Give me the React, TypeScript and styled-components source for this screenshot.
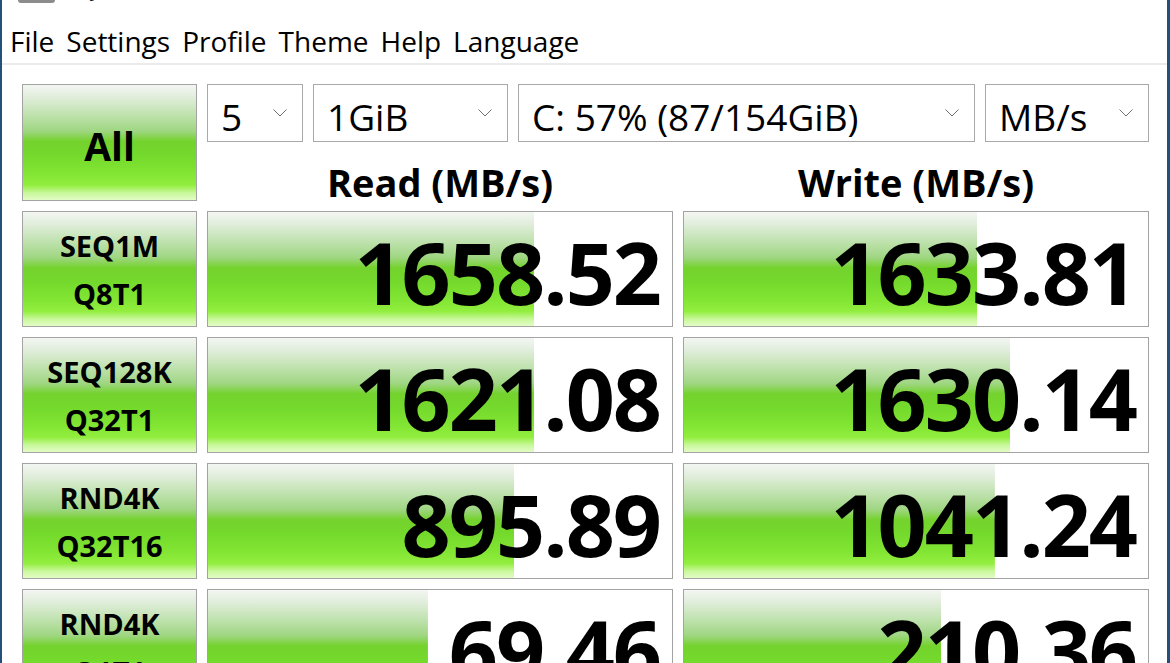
import styled, { createGlobalStyle } from "styled-components";

interface Result {
  name: string;
  detail: string;
  read: string;
  readPct: number;
  write: string;
  writePct: number;
}

const results: Result[] = [
  { name: "SEQ1M", detail: "Q8T1", read: "1658.52", readPct: 70.3, write: "1633.81", writePct: 63.2 },
  { name: "SEQ128K", detail: "Q32T1", read: "1621.08", readPct: 70.3, write: "1630.14", writePct: 70.3 },
  { name: "RND4K", detail: "Q32T16", read: "895.89", readPct: 66, write: "1041.24", writePct: 67 },
  { name: "RND4K", detail: "Q1T1", read: "69.46", readPct: 47.4, write: "210.36", writePct: 55.4 },
];

const menus = ["File", "Settings", "Profile", "Theme", "Help", "Language"];

const GREEN = `linear-gradient(
  to bottom,
  #f3f6f2 0%,
  #e2eedd 10%,
  #bfe2ae 26%,
  #9fd682 40%,
  #74d22d 49%,
  #74da2c 62%,
  #84e634 78%,
  #92ee3e 87%,
  #c9f89c 94%,
  #e2fcc6 100%
)`;

function Chevron() {
  return (
    <svg width="14" height="8" viewBox="0 0 14 8">
      <polyline points="0.5,0.5 7,7 13.5,0.5" fill="none" stroke="#707070" strokeWidth="1" />
    </svg>
  );
}

function Combo({ value, width }: { value: string; width?: number }) {
  return (
    <ComboBox $width={width}>
      <ComboText>{value}</ComboText>
      <Chevron />
    </ComboBox>
  );
}

function App() {
  return (
    <>
      <GlobalStyle />
      <Window>
        <TitleBar>
          <AppIcon />
          <TitleText>CrystalDiskMark 8.0.4 x64</TitleText>
        </TitleBar>
        <MenuBar>
          {menus.map((m) => (
            <MenuItem key={m}>{m}</MenuItem>
          ))}
        </MenuBar>
        <Board>
          <AllButton>All</AllButton>
          <Controls>
            <ComboRow>
              <Combo value="5" width={96} />
              <Combo value="1GiB" width={195} />
              <Combo value="C: 57% (87/154GiB)" width={457} />
              <Combo value="MB/s" />
            </ComboRow>
            <HeaderRow>
              <Heading>Read (MB/s)</Heading>
              <Heading>Write (MB/s)</Heading>
            </HeaderRow>
          </Controls>
          {results.map((r, i) => (
            <Row key={i}>
              <TestButton>
                <span>{r.name}</span>
                <span>{r.detail}</span>
              </TestButton>
              <Meter style={{ backgroundSize: `${r.readPct}% 100%` }}>{r.read}</Meter>
              <Meter style={{ backgroundSize: `${r.writePct}% 100%` }}>{r.write}</Meter>
            </Row>
          ))}
        </Board>
      </Window>
    </>
  );
}

const GlobalStyle = createGlobalStyle`
  html, body {
    margin: 0;
    padding: 0;
    width: 1170px;
    height: 663px;
    overflow: hidden;
    background: #ffffff;
    font-family: "Open Sans", "Noto Sans", sans-serif;
    color: #000000;
  }
  * {
    box-sizing: border-box;
  }
`;

const Window = styled.div`
  width: 1170px;
  height: 663px;
  overflow: hidden;

  display: flex;
  flex-direction: column;

  background: #ffffff;
  border-left: 2px solid #22507a;
  border-right: 3px solid #22507a;

  & > * {
    flex-shrink: 0;
  }
`;

const TitleBar = styled.div`
  height: 10px;
  overflow: hidden;

  display: flex;
  align-items: flex-start;
  gap: 12px;

  padding-left: 16px;
`;

const AppIcon = styled.div`
  width: 37px;
  height: 20px;
  margin-top: -17px;

  background: #8c8c8c;
  border-radius: 3px;
`;

const TitleText = styled.div`
  font-size: 22px;
  line-height: 24px;
  margin-top: -25px;
  color: #1a1a1a;
  white-space: nowrap;
`;

const MenuBar = styled.div`
  display: flex;
  gap: 12px;

  padding: 17px 8px 8px 8px;

  font-size: 28px;
  line-height: 28px;

  border-bottom: 2px solid #ebebeb;
`;

const MenuItem = styled.span`
  color: #000000;
`;

const Board = styled.div`
  display: grid;
  grid-template-columns: 175px 466px 466px;
  column-gap: 10px;
  row-gap: 10px;

  padding: 19px 0 0 20px;
`;

const greenButton = `
  border: 1px solid #a3a3a3;
  background: ${GREEN};
  font-weight: 700;
  color: #000000;
`;

const AllButton = styled.div`
  ${greenButton}
  height: 117px;

  display: flex;
  align-items: center;
  justify-content: center;

  padding-top: 6px;
  font-size: 39px;
  line-height: 39px;
`;

const Controls = styled.div`
  grid-column: 2 / 4;

  display: flex;
  flex-direction: column;
`;

const ComboRow = styled.div`
  display: flex;
  gap: 10px;
  height: 58px;
`;

const ComboBox = styled.div<{ $width?: number }>`
  ${(p) => (p.$width ? `width: ${p.$width}px;` : "flex: 1;")}
  height: 58px;

  display: flex;
  align-items: center;
  justify-content: space-between;

  padding: 6px 15px 0 13px;

  background: #ffffff;
  border: 1px solid #a9a9a9;

  svg {
    margin-top: -6px;
  }
`;

const ComboText = styled.span`
  font-size: 37px;
  line-height: 37px;
  white-space: nowrap;
`;

const HeaderRow = styled.div`
  height: 59px;

  display: grid;
  grid-template-columns: 466px 466px;
  column-gap: 10px;
`;

const Heading = styled.div`
  display: flex;
  align-items: flex-end;
  justify-content: center;

  font-size: 38px;
  line-height: 38px;
  font-weight: 700;
`;

const Row = styled.div`
  display: contents;
`;

const TestButton = styled.div`
  ${greenButton}
  height: 116px;

  display: flex;
  flex-direction: column;
  align-items: center;
  justify-content: center;

  padding-top: 2px;
  font-size: 29px;
  line-height: 48px;
`;

const Meter = styled.div`
  height: 116px;

  display: flex;
  align-items: center;
  justify-content: flex-end;

  padding: 6px 12px 0 0;

  border: 1px solid #a3a3a3;
  background-color: #ffffff;
  background-image: ${GREEN};
  background-repeat: no-repeat;

  font-size: 86px;
  line-height: 86px;
  font-weight: 700;
  letter-spacing: -2px;
`;

export default App;
